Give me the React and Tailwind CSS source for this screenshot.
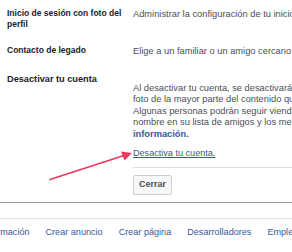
import React from 'react';

const rows = [
    {
        label: ['Inicio de sesión con foto del', 'perfil'],
        text: 'Administrar la configuración de tu inicio de sesión con foto del perfil',
    },
    {
        label: ['Contacto de legado'],
        text: 'Elige a un familiar o un amigo cercano para que administre tu cuenta',
    },
];

const paragraph = [
    'Al desactivar tu cuenta, se desactivará tu perfil y se eliminarán tu nombre y tu',
    'foto de la mayor parte del contenido que compartiste en Facebook.',
    'Algunas personas podrán seguir viendo tu',
    'nombre en su lista de amigos y los mensajes que enviaste.',
];

const footerLinks = ['Información', 'Crear anuncio', 'Crear página', 'Desarrolladores', 'Empleo', 'Privacidad'];

const App = () => {
    return (
        <div className="relative w-[292px] h-[252px] overflow-hidden bg-white font-['Liberation_Sans',Arial,sans-serif]">
            {/* Settings rows */}
            <div className="pt-[8px]">
                {rows.map((row, i) => (
                    <div key={i} className={`flex ${i === 0 ? 'h-[36.5px]' : 'h-[29px]'}`}>
                        <div className="w-[133px] shrink-0 pl-[7px] text-[8.5px] leading-[11px] font-bold text-[#1d2129]">
                            {row.label.map(l => <div key={l}>{l}</div>)}
                        </div>
                        <div className="whitespace-nowrap text-[9.3px] leading-[12px] text-[#4b4f56]">{row.text}</div>
                    </div>
                ))}

                {/* Deactivate section */}
                <div className="flex">
                    <div className="w-[133px] shrink-0 pl-[7px] text-[9.2px] leading-[11px] font-bold text-[#1d2129]">
                        Desactivar tu cuenta
                    </div>
                    <div className="pt-[9px] text-[9.3px] leading-[11.5px] text-[#4b4f56] whitespace-nowrap">
                        {paragraph.map(line => <div key={line}>{line}</div>)}
                        <div className="font-bold text-[#365899]">información.</div>
                        <div className="mt-[8px] pb-[7px] border-b border-[#dddfe2] w-[200px]">
                            <span className="text-[9.1px] text-[#365899] underline">Desactiva tu cuenta.</span>
                        </div>
                        <button className="mt-[7px] w-[39px] h-[20px] border border-[#ccd0d5] bg-[#f6f7f9] rounded-[2px] text-[9px] font-bold text-[#4b4f56]">
                            Cerrar
                        </button>
                    </div>
                </div>
            </div>

            {/* Footer */}
            <div className="mt-[7px] border-t border-[#9a9a9a] h-[16px]" />
            <div className="border-t border-[#e3e4e6] pt-[7px]">
                <div className="flex gap-[16px] -ml-[18px] whitespace-nowrap text-[9.1px] text-[#365899]">
                    {footerLinks.map(f => <span key={f}>{f}</span>)}
                </div>
            </div>

            {/* Annotation arrow */}
            <svg className="absolute left-0 top-0 pointer-events-none" width="292" height="252">
                <line x1="50" y1="179.5" x2="124" y2="155.5" stroke="#e8385e" strokeWidth="1.6" strokeLinecap="round" />
                <polygon points="132,153 121,151.5 124.5,160.5" fill="#e8385e" />
            </svg>
        </div>
    );
};

export default App;
